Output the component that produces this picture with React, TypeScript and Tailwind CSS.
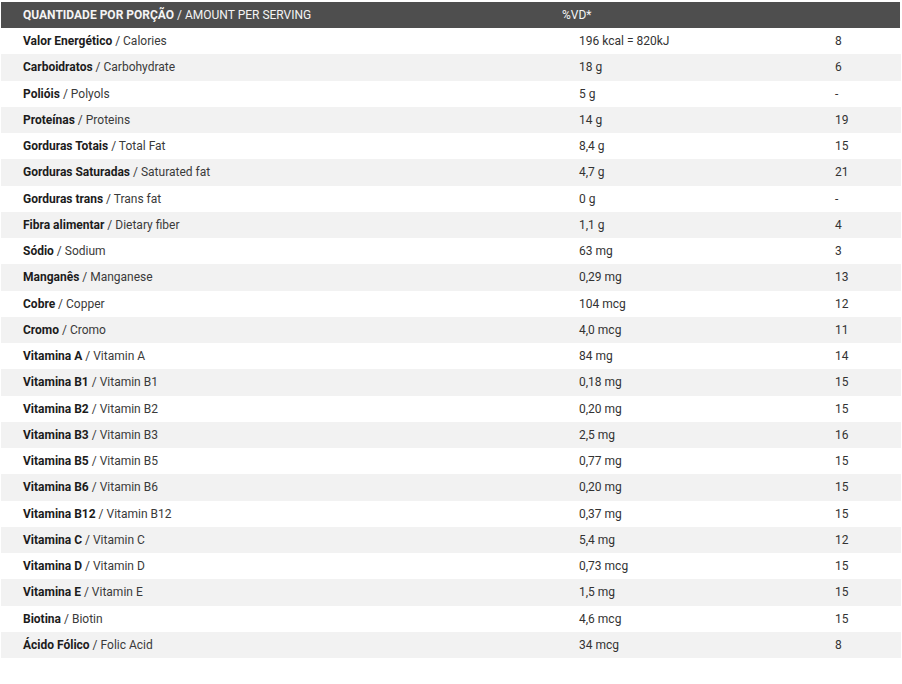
import React from "react";

interface Nutrient {
  pt: string;
  en: string;
  amount: string;
  vd: string;
}

const nutrients: Nutrient[] = [
  { pt: "Valor Energético", en: "Calories", amount: "196 kcal = 820kJ", vd: "8" },
  { pt: "Carboidratos", en: "Carbohydrate", amount: "18 g", vd: "6" },
  { pt: "Polióis", en: "Polyols", amount: "5 g", vd: "-" },
  { pt: "Proteínas", en: "Proteins", amount: "14 g", vd: "19" },
  { pt: "Gorduras Totais", en: "Total Fat", amount: "8,4 g", vd: "15" },
  { pt: "Gorduras Saturadas", en: "Saturated fat", amount: "4,7 g", vd: "21" },
  { pt: "Gorduras trans", en: "Trans fat", amount: "0 g", vd: "-" },
  { pt: "Fibra alimentar", en: "Dietary fiber", amount: "1,1 g", vd: "4" },
  { pt: "Sódio", en: "Sodium", amount: "63 mg", vd: "3" },
  { pt: "Manganês", en: "Manganese", amount: "0,29 mg", vd: "13" },
  { pt: "Cobre", en: "Copper", amount: "104 mcg", vd: "12" },
  { pt: "Cromo", en: "Cromo", amount: "4,0 mcg", vd: "11" },
  { pt: "Vitamina A", en: "Vitamin A", amount: "84 mg", vd: "14" },
  { pt: "Vitamina B1", en: "Vitamin B1", amount: "0,18 mg", vd: "15" },
  { pt: "Vitamina B2", en: "Vitamin B2", amount: "0,20 mg", vd: "15" },
  { pt: "Vitamina B3", en: "Vitamin B3", amount: "2,5 mg", vd: "16" },
  { pt: "Vitamina B5", en: "Vitamin B5", amount: "0,77 mg", vd: "15" },
  { pt: "Vitamina B6", en: "Vitamin B6", amount: "0,20 mg", vd: "15" },
  { pt: "Vitamina B12", en: "Vitamin B12", amount: "0,37 mg", vd: "15" },
  { pt: "Vitamina C", en: "Vitamin C", amount: "5,4 mg", vd: "12" },
  { pt: "Vitamina D", en: "Vitamin D", amount: "0,73 mcg", vd: "15" },
  { pt: "Vitamina E", en: "Vitamin E", amount: "1,5 mg", vd: "15" },
  { pt: "Biotina", en: "Biotin", amount: "4,6 mcg", vd: "15" },
  { pt: "Ácido Fólico", en: "Folic Acid", amount: "34 mcg", vd: "8" },
];

const App: React.FC = () => {
  return (
    <div className="w-[902px] h-[684px] bg-white pt-[2px] px-px font-['Roboto',sans-serif] text-[12px]">
      <div className="grid grid-cols-[556px_256px_1fr] h-[26px] items-center bg-[#4e4e4e] text-[#f4f4f4] mr-px">
        <div className="pl-[22px]">
          <span className="font-bold">QUANTIDADE POR PORÇÃO</span> / AMOUNT PER SERVING
        </div>
        <div className="pl-[5px]">%VD*</div>
        <div />
      </div>
      {nutrients.map((n, i) => (
        <div
          key={n.pt}
          className={`grid grid-cols-[556px_256px_1fr] h-[26.25px] items-center ${
            i % 2 === 1 ? "bg-[#f2f2f2]" : "bg-white"
          }`}
        >
          <div className="pl-[22px] text-[#3a3a3a]">
            <span className="font-bold text-[#1c1c1c]">{n.pt}</span> / {n.en}
          </div>
          <div className="pl-[22px] text-[#333]">{n.amount}</div>
          <div className="pl-[22px] text-[#333]">{n.vd}</div>
        </div>
      ))}
    </div>
  );
};

export default App;
